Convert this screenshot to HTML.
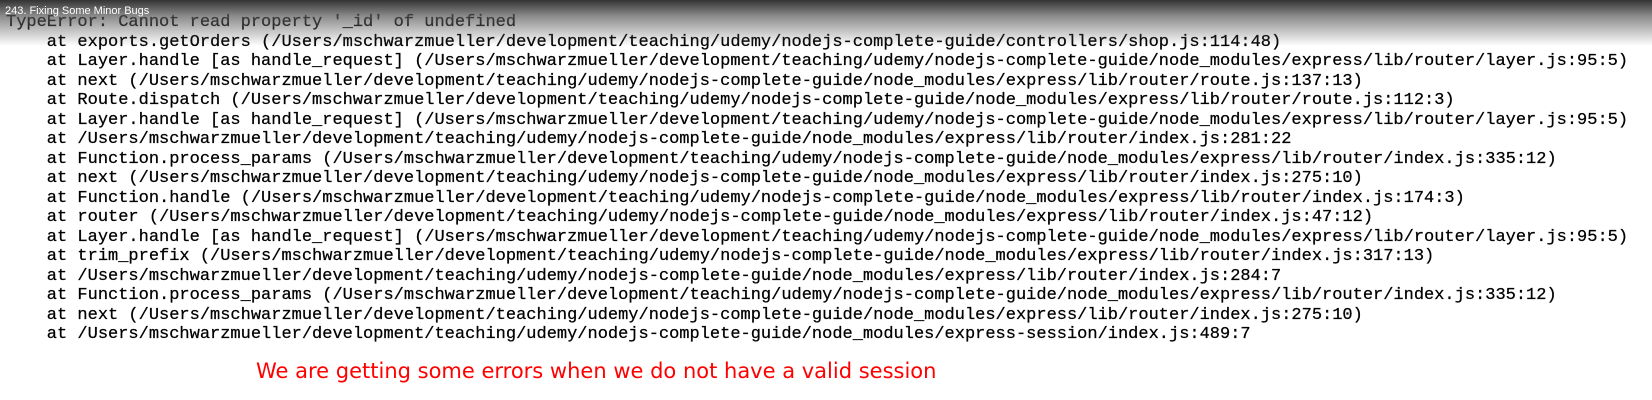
<!DOCTYPE html>
<html><head><meta charset="utf-8"><style>
html,body{margin:0;padding:0;width:1652px;height:400px;background:#fff;overflow:hidden;position:relative}
pre{position:absolute;left:6px;top:13px;margin:0;font-family:"Liberation Mono",monospace;font-size:17px;line-height:19.5px;color:#000;-webkit-text-stroke:0.25px #000}
.hdr{position:absolute;left:0;top:0;width:1652px;height:46px;background:linear-gradient(to bottom,rgba(40,40,40,0.95) 0%,rgba(90,90,90,0.7) 35%,rgba(255,255,255,0) 100%)}
.title{position:absolute;left:5px;top:5px;font-family:"Liberation Sans",sans-serif;font-size:11px;color:#fff}
.note{position:absolute;left:256px;top:359px;font-family:"DejaVu Sans",sans-serif;font-size:21px;color:#f00;white-space:nowrap}
</style></head><body>
<pre>TypeError: Cannot read property '_id' of undefined
    at exports.getOrders (/Users/mschwarzmueller/development/teaching/udemy/nodejs-complete-guide/controllers/shop.js:114:48)
    at Layer.handle [as handle_request] (/Users/mschwarzmueller/development/teaching/udemy/nodejs-complete-guide/node_modules/express/lib/router/layer.js:95:5)
    at next (/Users/mschwarzmueller/development/teaching/udemy/nodejs-complete-guide/node_modules/express/lib/router/route.js:137:13)
    at Route.dispatch (/Users/mschwarzmueller/development/teaching/udemy/nodejs-complete-guide/node_modules/express/lib/router/route.js:112:3)
    at Layer.handle [as handle_request] (/Users/mschwarzmueller/development/teaching/udemy/nodejs-complete-guide/node_modules/express/lib/router/layer.js:95:5)
    at /Users/mschwarzmueller/development/teaching/udemy/nodejs-complete-guide/node_modules/express/lib/router/index.js:281:22
    at Function.process_params (/Users/mschwarzmueller/development/teaching/udemy/nodejs-complete-guide/node_modules/express/lib/router/index.js:335:12)
    at next (/Users/mschwarzmueller/development/teaching/udemy/nodejs-complete-guide/node_modules/express/lib/router/index.js:275:10)
    at Function.handle (/Users/mschwarzmueller/development/teaching/udemy/nodejs-complete-guide/node_modules/express/lib/router/index.js:174:3)
    at router (/Users/mschwarzmueller/development/teaching/udemy/nodejs-complete-guide/node_modules/express/lib/router/index.js:47:12)
    at Layer.handle [as handle_request] (/Users/mschwarzmueller/development/teaching/udemy/nodejs-complete-guide/node_modules/express/lib/router/layer.js:95:5)
    at trim_prefix (/Users/mschwarzmueller/development/teaching/udemy/nodejs-complete-guide/node_modules/express/lib/router/index.js:317:13)
    at /Users/mschwarzmueller/development/teaching/udemy/nodejs-complete-guide/node_modules/express/lib/router/index.js:284:7
    at Function.process_params (/Users/mschwarzmueller/development/teaching/udemy/nodejs-complete-guide/node_modules/express/lib/router/index.js:335:12)
    at next (/Users/mschwarzmueller/development/teaching/udemy/nodejs-complete-guide/node_modules/express/lib/router/index.js:275:10)
    at /Users/mschwarzmueller/development/teaching/udemy/nodejs-complete-guide/node_modules/express-session/index.js:489:7</pre>
<div class="hdr"></div>
<div class="title">243. Fixing Some Minor Bugs</div>
<div class="note">We are getting some errors when we do not have a valid session</div>
</body></html>
